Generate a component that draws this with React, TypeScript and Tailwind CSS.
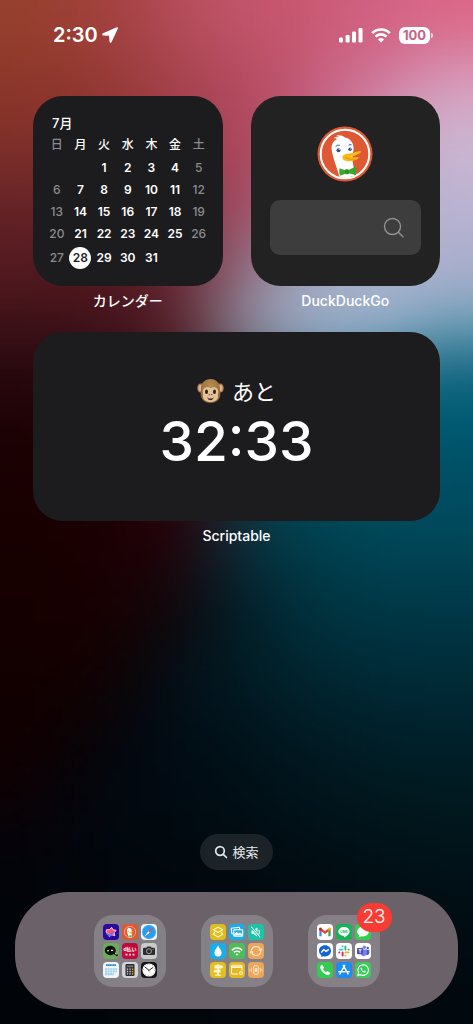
import type { ReactNode } from "react";

const WALLPAPER: string[] = [
  "96402e 9d4036 a84348 b54e5c c05469 c8566f cc5e7b d46384 da6888",
  "8f392b 953a31 9e3e3e aa4552 b64c60 c05670 cc6585 d27397 d98cac",
  "89342a 8c3430 953a3a a34250 b1475c bc5470 c86e90 d093b2 d3aac6",
  "7c2e29 823030 8c3438 9c3e4c ab465a b45874 c080a0 caa8c4 c9b6d2",
  "6b2628 702828 7c2c34 903846 a0445a b06880 b898b4 c0b0cc beb4d2",
  "5c1e24 5c1e25 681f2c 803444 95546a a07890 acaac4 b4b2d0 b2b0d0",
  "50191e 4c171c 54191f 6b2c38 8c6474 9aa0b8 a5b0ca a9b2cf a6aecb",
  "3e1218 40121a 48161f 5c2a34 88808f 9aa6bf a0b0ca 94adc6 72a0b8",
  "2b0a10 2e0b12 380e16 481a22 5c4c5a 607c90 5088a0 387e98 246f8a",
  "200407 240509 2c080e 36101a 283c4a 185468 10647c 046078 005d76",
  "1b0103 1e0204 26050a 2e0c12 1c3440 044c5e 00546a 00566c 00546a",
  "190001 1a0103 200408 2c080f 1c303b 004658 004c5e 005064 004c62",
  "180001 190001 1e0004 26040c 122e3a 003e4d 004454 004859 00485b",
  "160000 180001 1b0105 160a10 08222c 01333f 003b49 003f4f 003e4e",
  "150000 170001 150204 0c0a0d 041c25 002b37 003440 003644 003645",
  "130000 140001 0d0407 061017 021a23 01252f 002a36 002d3a 002e3b",
  "110001 100203 060609 03101a 01161e 011e28 00232d 002631 002732",
  "100002 090306 030710 010d15 011219 011720 011b24 001f29 001f29",
  "0c0105 05050c 02080f 010b13 010e15 01131b 01161e 01191f 011a20",
  "060308 02060d 01080e 010a10 010c12 010f15 011219 01141a 01161b",
  "02040a 02060b 01070c 01080d 01090f 010b11 010d13 010f15 011118",
  "01050a 01060b 01070c 01070c 01080d 01090e 010a0f 010b11 010d13",
  "01040a 01050b 01060b 01070c 01070c 01070c 01080d 01090e 010a10",
  "010409 01050a 01060b 01060b 01070c 01070c 01070c 01080d 01090e",
];

function Wallpaper() {
  return (
    <svg aria-hidden="true" className="absolute inset-0 -z-10 size-full" viewBox="0 0 9 24" preserveAspectRatio="none">
      <filter id="soften" filterUnits="userSpaceOnUse" x="-3" y="-3" width="15" height="30" colorInterpolationFilters="sRGB">
        <feGaussianBlur stdDeviation="0.55 0.55" />
      </filter>
      <g filter="url(#soften)">
        {WALLPAPER.map((row, r) =>
          row.split(" ").map((color, c) => {
            const x = c === 0 ? -3 : c;
            const y = r === 0 ? -3 : r;
            return (
              <rect
                key={`${r}-${c}`}
                x={x}
                y={y}
                width={(c === 8 ? 12 : c + 1.02) - x}
                height={(r === 23 ? 27 : r + 1.02) - y}
                fill={`#${color}`}
              />
            );
          }),
        )}
      </g>
    </svg>
  );
}

function StatusBar() {
  return (
    <header className="flex h-[70px] items-center justify-between pr-10 pl-[53px]">
      <div className="flex items-center gap-1">
        <time className="text-xl leading-6 font-semibold">2:30</time>
        <svg className="size-4" viewBox="0 0 16 16" role="img" aria-label="位置情報">
          <path d="M14.800.3L1 6.300C-.1 6.800 0 8.300 1.200 8.400l5.900.4.4 6c.1 1.200 1.600 1.400 2.100.3L15.900 1.400C16.200.6 15.500 0 14.800.3z" fill="white" />
        </svg>
      </div>
      <div className="flex items-center gap-2">
        <svg className="h-4 w-6" viewBox="0 0 24 16" fill="white" role="img" aria-label="電波">
          <rect x="0" y="10.5" width="4" height="5" rx="1.2" />
          <rect x="6.6" y="8" width="4" height="7.500" rx="1.2" />
          <rect x="13" y="4.500" width="4" height="11" rx="1.2" />
          <rect x="19.500" y="1" width="4" height="14.500" rx="1.2" />
        </svg>
        <svg className="h-4 w-5" viewBox="0 0 20 16" fill="none" stroke="white" strokeWidth="2.700" role="img" aria-label="Wi-Fi">
          <path d="M1.200 6.100a12.600 12.600 0 0 1 17.600 0" />
          <path d="M4.500 9.600a7.900 7.900 0 0 1 11 0" />
          <path d="M10 15.600l-3-3.100a4.300 4.300 0 0 1 6 0z" fill="white" stroke="none" />
        </svg>
        <div className="flex items-center gap-px">
          <span className="flex h-[17px] w-[31px] items-center justify-center rounded-md bg-white text-[13px] leading-4 font-bold text-[#c9607f]">
            100
          </span>
          <span className="h-[5px] w-0.5 rounded-r-full bg-white/70" />
        </div>
      </div>
    </header>
  );
}

const WEEKDAYS = ["日", "月", "火", "水", "木", "金", "土"];
const WEEKS: (number | null)[][] = [
  [null, null, 1, 2, 3, 4, 5],
  [6, 7, 8, 9, 10, 11, 12],
  [13, 14, 15, 16, 17, 18, 19],
  [20, 21, 22, 23, 24, 25, 26],
  [27, 28, 29, 30, 31, null, null],
];

function CalendarWidget() {
  return (
    <div className="aspect-square rounded-[30px] bg-[#1c1c1e] px-3 pt-[17px]">
      <table className="w-full table-fixed text-center text-xs leading-4 font-semibold">
        <caption className="h-5 pl-[7px] text-left text-[13px] leading-5 font-medium">7月</caption>
        <thead>
          <tr>
            {WEEKDAYS.map((day, i) => (
              <th key={day} scope="col" className={i % 6 === 0 ? "h-6 p-0 font-medium text-[#8b8b90]" : "h-6 p-0 font-medium"}>
                {day}
              </th>
            ))}
          </tr>
        </thead>
        <tbody>
          {WEEKS.map((week, w) => (
            <tr key={w} className="last:h-[26px]">
              {week.map((day, i) => (
                <td key={i} className={i % 6 === 0 ? "h-[22px] p-0 font-medium text-[#8b8b90]" : "h-[22px] p-0"}>
                  {day === 28 ? (
                    <span className="inline-flex size-[22px] items-center justify-center rounded-full bg-white align-middle text-[#1c1c1e]">
                      28
                    </span>
                  ) : (
                    day
                  )}
                </td>
              ))}
            </tr>
          ))}
        </tbody>
      </table>
    </div>
  );
}

function DuckArt() {
  return (
    <>
      <circle cx="28" cy="28" r="27.500" fill="#de5833" />
      <circle cx="28" cy="28" r="24.300" fill="#de5833" stroke="white" strokeWidth="2" />
      <path
        d="M22.500 50.800C19.500 40 15 30 14.600 22.500 14.300 18 16.600 14.600 20.300 13.300c-.7-.8-2-1.200-3.400-1.100 1.200-1.300 3.300-1.800 5-1.200-.6-.7-1.600-1.300-2.600-1.500 3-.8 6.500-.1 8.600 1.900 4.900.7 8.100 4.500 8.600 9.600.5 4.500-1.900 9-.9 14.500.8 4.900 2.400 10.500 1.500 14.300a24 24 0 0 1-14.600 1z"
        fill="white"
      />
      <circle cx="21.500" cy="24.200" r="2" fill="#2d4f8e" />
      <circle cx="22.200" cy="23.500" r=".6" fill="white" />
      <circle cx="33" cy="23.300" r="1.700" fill="#2d4f8e" />
      <circle cx="33.600" cy="22.700" r=".5" fill="white" />
      <path d="M18.600 20.500q2-2 4.300-1.200M31.500 19.200q1.500-1.100 3-.3" fill="none" stroke="#2d4f8e" strokeWidth=".9" />
      <path
        d="M25.300 31.300c.5-3.200 4.500-3.500 8-4 4-.6 6.500-2 9.500-2.300 1.600-.1 1.600 1.200.4 2-3 2-6.500 3.200-10.200 3.700 2.500.8 5 .9 7.300.4 1.500-.3 1.800.9.700 1.700-3 2-7.800 3-11.500 2.200-2.400-.6-4.500-1.700-4.200-3.700z"
        fill="#fdb913"
      />
      <path d="M28 31.300c3 1.800 7 2.600 11.500 1.600" fill="none" stroke="#de8a12" strokeWidth=".7" />
      <path d="M22.500 42.200l6.500 2.300v3l-5.800 2.300c-1-2-1.200-5-.7-7.600zM38.800 40.500l-7.600 3.800v3l7.600 1.600c.8-2.600.8-5.800 0-8.400z" fill="#3ca82b" />
      <rect x="28" y="43.300" width="4" height="5" rx="1.400" fill="#2f9423" />
    </>
  );
}

function DuckDuckGoWidget() {
  return (
    <div className="flex aspect-square flex-col items-center gap-[18px] rounded-[30px] bg-[#222] px-[19px] pt-[30px]">
      <svg className="size-14" viewBox="0 0 56 56" role="img" aria-label="DuckDuckGo">
        <DuckArt />
      </svg>
      <label className="flex h-[55px] w-full items-center rounded-[10px] bg-[#3d3d3d] pr-[17px] pl-4">
        <input type="search" aria-label="DuckDuckGoで検索" className="min-w-0 flex-1 bg-transparent outline-none" />
        <svg className="size-[21px]" viewBox="0 0 21 21" fill="none" stroke="#929292" strokeWidth="1.400" strokeLinecap="round" aria-hidden="true">
          <circle cx="9.500" cy="9.500" r="8" />
          <path d="M15.300 15.300l4.700 4.500" />
        </svg>
      </label>
    </div>
  );
}

function Monkey() {
  return (
    <svg className="size-[27px]" viewBox="0 0 27 27" role="img" aria-label="🐵">
      <defs>
        <radialGradient id="fur" cx=".5" cy=".3" r=".7">
          <stop offset="0" stopColor="#b98d52" />
          <stop offset="1" stopColor="#8d6434" />
        </radialGradient>
      </defs>
      <ellipse cx="4" cy="10" rx="3.700" ry="4.500" fill="#a97c48" />
      <ellipse cx="23" cy="10" rx="3.700" ry="4.500" fill="#a97c48" />
      <ellipse cx="3.700" cy="10.200" rx="2.200" ry="3.100" fill="#e9ae98" />
      <ellipse cx="23.300" cy="10.200" rx="2.200" ry="3.100" fill="#e9ae98" />
      <path d="M13.500 1C8 1 4 5 4 10.500c0 2-.5 4-.3 6.500.4 5 4.800 8 9.800 8s9.400-3 9.800-8c.2-2.500-.3-4.500-.3-6.500C23 5 19 1 13.500 1z" fill="url(#fur)" />
      <path d="M13.500 10.300C11.500 8.500 5.700 9 5.700 14c0 1.600.7 2.300.3 4-.5 3.500 3.100 6 7.500 6s8-2.500 7.500-6c-.4-1.700.3-2.400.3-4 0-5-5.800-5.500-7.800-3.700z" fill="#e4c496" />
      <ellipse cx="9.500" cy="13.700" rx="1.500" ry="2.200" fill="#2c211b" />
      <ellipse cx="17.500" cy="13.700" rx="1.500" ry="2.200" fill="#2c211b" />
      <path d="M12 16.700h.6M14.400 16.700h.6" stroke="#6b4426" strokeWidth="1" strokeLinecap="round" />
      <path d="M10.300 19.300q3.200 1 6.400 0-.6 2.900-3.200 2.900t-3.200-2.900z" fill="#5b2321" />
      <path d="M11.100 19.700q2.400.7 4.800 0" stroke="white" strokeWidth=".7" fill="none" />
    </svg>
  );
}

function TimerWidget() {
  return (
    <div className="flex h-[189px] flex-col items-center rounded-[30px] bg-[#1c1c1e] pt-[46px]">
      <p className="flex h-7 items-center gap-2 text-[22px] leading-7">
        <Monkey />
        あと
      </p>
      <time className="text-[55px] leading-[70px] font-medium">32:33</time>
    </div>
  );
}

function Widget({ name, children }: { name: string; children: ReactNode }) {
  return (
    <section aria-label={name}>
      {children}
      <p className="mt-1 h-[22px] text-center text-sm leading-[22px] font-medium">{name}</p>
    </section>
  );
}

type IconDef = { name: string; bg: string; art: ReactNode };

const APPS: IconDef[] = [
  {
    name: "Arc",
    bg: "bg-[#2a0a9c]",
    art: (
      <>
        <path d="M3.400 5.800l3.200-.2 2-2.300 1.500 2.500 3 .5-1.900 2.400.6 3-3-.9-2.600 1.700-.5-2.700-2.500-1.500z" fill="#ff536a" stroke="#ffc3dc" strokeWidth="1" strokeLinejoin="round" />
        <path d="M3.800 9.700l3 2 4-4" fill="none" stroke="#6272ff" strokeWidth="1.500" strokeLinecap="round" />
      </>
    ),
  },
  {
    name: "DuckDuckGo",
    bg: "bg-[#de5833]",
    art: (
      <g transform="translate(1.500 1.500) scale(.232)">
        <DuckArt />
      </g>
    ),
  },
  {
    name: "Safari",
    bg: "bg-[#f4f6f8]",
    art: (
      <>
        <circle cx="8" cy="8" r="7" fill="#259df2" />
        <circle cx="8" cy="8" r="6.200" fill="none" stroke="#c8e8ff" strokeWidth=".6" strokeDasharray=".3 1" />
        <path d="M12.500 3.500L8.800 8.800 7.200 7.200z" fill="#f04b3c" />
        <path d="M3.500 12.500l3.700-5.300 1.600 1.600z" fill="white" />
      </>
    ),
  },
  {
    name: "メモ",
    bg: "bg-[#6cab57]",
    art: (
      <>
        <ellipse cx="7.300" cy="7.500" rx="5.500" ry="4.700" fill="#0d0f0d" />
        <path d="M11 10l3.500 2.800" stroke="#0d0f0d" strokeWidth="2" />
        <path d="M4 7.800h2M8 7.400h2.200M12.300 10.400l1.200 1" stroke="white" strokeWidth="1.100" />
      </>
    ),
  },
  {
    name: "d払い",
    bg: "bg-[#c3093b]",
    art: (
      <>
        <text x="8" y="8" textAnchor="middle" fontSize="5" fontWeight="700" fill="white">d払い</text>
        <path d="M3.500 11.600h2M7 11.600h2M10.500 11.600h2" stroke="#ffd3d8" strokeWidth="1.700" />
      </>
    ),
  },
  {
    name: "カメラ",
    bg: "bg-[#cacacd]",
    art: (
      <>
        <path d="M3 4.800h2.400l1-1.400h3.200l1 1.400H13q1 0 1 1V11q0 1-1 1H3q-1 0-1-1V5.800q0-1 1-1z" fill="#2c2c2e" />
        <circle cx="8" cy="8.200" r="2.500" fill="none" stroke="#bcbcc0" strokeWidth=".8" />
        <circle cx="12.200" cy="6.300" r=".5" fill="#f5c518" />
      </>
    ),
  },
  {
    name: "カレンダー",
    bg: "bg-[#eef6fb]",
    art: (
      <>
        <path d="M3 3.100h10" stroke="#2b86c8" strokeWidth="1.600" strokeDasharray="1.500 .25" />
        <path d="M2 6.200h12v4H2zM2 10.800h9v2.500H2z" fill="#9fcdec" />
        <path d="M4.500 6v7.500M7 6v7.500M9.500 6v7.500M12 6v4.500M2 8.200h12" stroke="#e9f4fb" strokeWidth=".6" />
      </>
    ),
  },
  {
    name: "計算機",
    bg: "bg-[#d4d4d6]",
    art: (
      <>
        <rect x="3.500" y="2" width="9" height="12" rx="1.200" fill="#2b2b2d" />
        <rect x="4.700" y="3.300" width="6.600" height="2" fill="#6f6f73" />
        <path d="M4.800 7.200h4.400M4.800 9.500h4.400M4.800 11.800h4.400" stroke="#d7d7da" strokeWidth="1.300" strokeDasharray="1.400 1.200" />
        <path d="M10.600 6.500v6" stroke="#ff9f0a" strokeWidth="1.400" strokeDasharray="1.400 .9" />
      </>
    ),
  },
  {
    name: "時計",
    bg: "bg-[#141416]",
    art: (
      <>
        <circle cx="8" cy="8" r="6.600" fill="white" />
        <circle cx="8" cy="8" r="5.600" fill="none" stroke="#444" strokeWidth=".8" strokeDasharray=".5 2.430" />
        <path d="M8 8.300L4.300 5.300M7.700 8.500l4.300-3" stroke="#141416" strokeWidth=".9" strokeLinecap="round" />
        <path d="M8 8l1.500 4" stroke="#f59b23" strokeWidth=".4" />
      </>
    ),
  },
];

const SHORTCUTS: IconDef[] = [
  {
    name: "レイヤー",
    bg: "bg-[#e0bd1e]",
    art: (
      <g fill="none" stroke="#fff6cc" strokeWidth="1.100" strokeLinejoin="round">
        <path d="M8 3.200l4.700 2.600L8 8.400 3.300 5.800z" />
        <path d="M5 8.200l-1.700 2L8 12.900l4.700-2.700-1.700-2" />
      </g>
    ),
  },
  {
    name: "写真",
    bg: "bg-[#1badea]",
    art: (
      <g fill="none" stroke="white" strokeWidth="1.100" strokeLinejoin="round">
        <path d="M4.500 10L2.800 9.500 2.300 4.200l8-.9.500 1.700" />
        <rect x="4.800" y="5.600" width="8.800" height="6.600" rx="1" />
        <path d="M5 11.500l2.500-3 2 2 1.500-1.400 2.300 2.400" fill="white" />
      </g>
    ),
  },
  {
    name: "消音",
    bg: "bg-[#1fc2a4]",
    art: (
      <g fill="none" stroke="#d4fff3" strokeWidth="1.100" strokeLinecap="round" strokeLinejoin="round">
        <path d="M4 6.800h1.800L9 4.300v7.400L5.800 9.500H4z" fill="#d4fff3" />
        <path d="M3.500 3l8.500 10" stroke="#1fc2a4" strokeWidth="2.400" />
        <path d="M3.500 3l8.500 10M11 6.300q1 1.700 0 3.400" />
      </g>
    ),
  },
  { name: "水分", bg: "bg-[#17aeea]", art: <path d="M8 2.600c1 2.300 3.600 4.500 3.600 7.200a3.600 3.600 0 0 1-7.200 0C4.400 7.100 7 4.900 8 2.600z" fill="white" /> },
  {
    name: "Wi-Fi",
    bg: "bg-[#4fbc5a]",
    art: (
      <g fill="none" stroke="white" strokeWidth="1.500">
        <path d="M2.800 7.200a7.500 7.500 0 0 1 10.400 0M4.900 9.400a4.500 4.500 0 0 1 6.200 0" />
        <path d="M8 12.700l-1.500-1.600a2.200 2.200 0 0 1 3 0z" fill="white" stroke="none" />
      </g>
    ),
  },
  {
    name: "更新",
    bg: "bg-[#eda65a]",
    art: (
      <g fill="none" stroke="#ffe9cd" strokeWidth="1.200" strokeLinecap="round">
        <path d="M3.400 7.200A4.700 4.700 0 0 1 12.400 6.600M12.600 8.800A4.700 4.700 0 0 1 3.600 9.400" />
        <path d="M11.200 6.900l1.600.8 1-1.500M4.800 9.100l-1.600-.8-1 1.500" />
      </g>
    ),
  },
  {
    name: "道標",
    bg: "bg-[#e2be22]",
    art: (
      <path d="M7.300 2.300h1.500v1h3L13.300 5l-1.500 1.600h-3v1h1.700v3h-1.700v2h2v1.200H5.300v-1.200h2v-2H4.700L3.200 9.200l1.500-1.500h2.600V6.600H4.500V3.300h2.800z" fill="#fff7d2" />
    ),
  },
  {
    name: "予定を追加",
    bg: "bg-[#e3b923]",
    art: (
      <g fill="none" stroke="#fff7d2" strokeWidth="1.100">
        <rect x="2.500" y="3.300" width="10.500" height="8.700" rx="1.200" />
        <path d="M2.500 5.200H13" strokeWidth="1.800" />
        <circle cx="12" cy="11" r="2.500" fill="#fff7d2" stroke="#e3b923" />
        <path d="M10.800 11h2.400M12 9.800v2.400" stroke="#e3b923" strokeWidth=".8" />
      </g>
    ),
  },
  {
    name: "バイブレーション",
    bg: "bg-[#eca55b]",
    art: (
      <g fill="none" stroke="#ffe3c2" strokeWidth="1" strokeLinecap="round">
        <rect x="5.700" y="3.700" width="4.600" height="8.600" rx="1" />
        <path d="M6.800 6h2.400v4H6.800z" fill="#ffe3c2" stroke="none" />
        <path d="M3.600 6.200v3.600M12.400 6.200v3.600M1.900 7.300v1.400M14.100 7.300v1.400" strokeWidth=".8" />
      </g>
    ),
  },
];

const SOCIAL: IconDef[] = [
  {
    name: "Gmail",
    bg: "bg-white",
    art: (
      <g fill="none" strokeWidth="2.300">
        <path d="M3.500 5v7.300" stroke="#4285f4" />
        <path d="M12.500 5v7.300" stroke="#34a853" />
        <path d="M2.600 4.500L8 8.700l5.400-4.200" stroke="#ea4335" strokeLinejoin="round" />
        <path d="M12.500 3.800v2.800" stroke="#fbbc04" />
        <path d="M3.500 3.800v2.800" stroke="#c5221f" />
      </g>
    ),
  },
  {
    name: "LINE",
    bg: "bg-[#16b458]",
    art: (
      <>
        <path d="M8 3c3.200 0 5.600 1.900 5.600 4.400 0 2.300-2.500 4.300-5.600 6 .2-.9.300-1.500-.2-1.600C4.800 11.700 2.400 9.900 2.400 7.400 2.400 4.900 4.800 3 8 3z" fill="white" />
        <text x="8" y="8.700" textAnchor="middle" fontSize="3.400" fontWeight="700" fill="#16b458">LINE</text>
      </>
    ),
  },
  { name: "メッセージ", bg: "bg-[#32cf4d]", art: <path d="M8 2.700c3.300 0 5.800 2.100 5.800 4.900s-2.500 4.900-5.800 4.900q-1 0-1.900-.3-.9.900-2.700 1.100.9-1 .8-2.100c-1.300-.9-2-2.200-2-3.600 0-2.800 2.500-4.900 5.800-4.900z" fill="white" /> },
  {
    name: "Messenger",
    bg: "bg-white",
    art: (
      <>
        <path d="M8 2.200c3.400 0 6 2.400 6 5.600s-2.600 5.600-6 5.600q-.9 0-1.700-.2l-2 .9v-1.900C2.800 11.200 2 9.600 2 7.800c0-3.200 2.600-5.600 6-5.600z" fill="#1262d8" />
        <path d="M4.300 9.600L6.700 6.500l2.400 1.900 2.700-2.100" fill="none" stroke="white" strokeWidth="1.500" strokeLinejoin="round" />
      </>
    ),
  },
  {
    name: "Slack",
    bg: "bg-white",
    art: (
      <g strokeWidth="1.900" strokeLinecap="round">
        <path d="M3.500 6.600h3.100M6.600 3.200v.2" stroke="#36c5f0" />
        <path d="M9.400 3.500v3.100M12.600 6.600h.2" stroke="#2eb67d" />
        <path d="M9.400 9.400h3.100M9.400 12.600v.2" stroke="#ecb22e" />
        <path d="M6.600 9.400v3.100M3.200 9.400h.2" stroke="#e01e5a" />
      </g>
    ),
  },
  {
    name: "Teams",
    bg: "bg-white",
    art: (
      <>
        <circle cx="9.300" cy="4.200" r="1.700" fill="#7b83eb" />
        <circle cx="12.700" cy="4.900" r="1.200" fill="#5059c9" />
        <path d="M11 6.700h3.300v3.200a2 2 0 0 1-3.300 1.600z" fill="#5059c9" />
        <path d="M6 6.500h5.700v4a3 3 0 0 1-5.700 1z" fill="#7b83eb" />
        <rect x="2" y="5" width="6.200" height="6.200" rx=".7" fill="#4b53bc" />
        <path d="M3.500 6.700h3.200M5.100 6.700v3.200" stroke="white" strokeWidth=".9" />
      </>
    ),
  },
  { name: "電話", bg: "bg-[#35ca50]", art: <path d="M4.500 3.200c-1 .6-1.500 1.500-1.200 2.700.8 3.200 3.600 6.100 6.900 7 1.200.3 2.100-.2 2.700-1.200.3-.5.100-.9-.3-1.200l-1.600-1c-.5-.3-.9-.2-1.300.2l-.5.600c-1.400-.6-2.500-1.700-3.200-3.100l.6-.6c.4-.4.4-.8.200-1.300l-1-1.800c-.3-.5-.8-.6-1.300-.3z" fill="white" /> },
  {
    name: "App Store",
    bg: "bg-[#1b8cf0]",
    art: <path d="M8.800 3.300L5.200 9.600M7.200 3.300l4.900 8.600M2.800 9.700h6.300M11.200 9.700h2M4.400 11.200l-.5.900" fill="none" stroke="white" strokeWidth="1.400" strokeLinecap="round" />,
  },
  {
    name: "WhatsApp",
    bg: "bg-[#3bcb5a]",
    art: (
      <>
        <path d="M8.200 2.700a5.300 5.300 0 1 1-2.500 10L2.800 13.400l.8-2.800a5.300 5.300 0 0 1 4.600-7.900z" fill="none" stroke="white" strokeWidth="1.100" />
        <path d="M6.300 5.400c-.7.300-.9 1-.6 1.800.6 1.600 1.800 2.700 3.400 3.200.8.200 1.500-.1 1.700-.9l-1.500-.9-.7.700c-.8-.3-1.400-.9-1.700-1.600l.6-.7z" fill="white" />
      </>
    ),
  },
];

function Folder({ label, icons, badge }: { label: string; icons: IconDef[]; badge?: number }) {
  return (
    <button type="button" aria-label={label} className="relative grid grid-cols-3 gap-[3px] rounded-[19px] bg-[#858085] p-[9px]">
      {icons.map((icon) => (
        <span key={icon.name} className={`${icon.bg} size-4 overflow-hidden rounded-[4px]`}>
          <svg className="size-4" viewBox="0 0 16 16" role="img" aria-label={icon.name}>
            {icon.art}
          </svg>
        </span>
      ))}
      {badge !== undefined && (
        <span className="absolute -top-3 -right-3 flex h-[29px] w-[35px] items-center justify-center rounded-full bg-[#f93c33] text-[19px] leading-6 font-light">
          {badge}
        </span>
      )}
    </button>
  );
}

export default function App() {
  return (
    <main
      lang="ja"
      className="relative isolate flex min-h-screen flex-col overflow-hidden font-['Inter','Noto_Sans_CJK_JP',sans-serif] text-white"
    >
      <Wallpaper />
      <StatusBar />
      <div className="mt-[26px] flex flex-col gap-5 px-[33px]">
        <div className="grid grid-cols-2 gap-7">
          <Widget name="カレンダー">
            <CalendarWidget />
          </Widget>
          <Widget name="DuckDuckGo">
            <DuckDuckGoWidget />
          </Widget>
        </div>
        <Widget name="Scriptable">
          <TimerWidget />
        </Widget>
      </div>
      <div className="mt-auto flex flex-col items-center gap-[22px] px-[15px] pt-6 pb-[15px]">
        <button type="button" className="flex h-9 items-center gap-1 rounded-full bg-[#1b2329] px-3.5 text-[13px] leading-5 text-[#e4e8ea]">
          <svg className="size-3.5" viewBox="0 0 14 14" fill="none" stroke="currentColor" strokeWidth="1.700" strokeLinecap="round" aria-hidden="true">
            <circle cx="6" cy="6" r="4.300" />
            <path d="M9.300 9.300l3.200 3.200" />
          </svg>
          検索
        </button>
        <nav aria-label="Dock" className="flex h-[117px] w-full items-center justify-center gap-[35px] rounded-[54px] bg-[#6a6268]">
          <Folder label="アプリ" icons={APPS} />
          <Folder label="ショートカット" icons={SHORTCUTS} />
          <Folder label="連絡" icons={SOCIAL} badge={23} />
        </nav>
      </div>
    </main>
  );
}
